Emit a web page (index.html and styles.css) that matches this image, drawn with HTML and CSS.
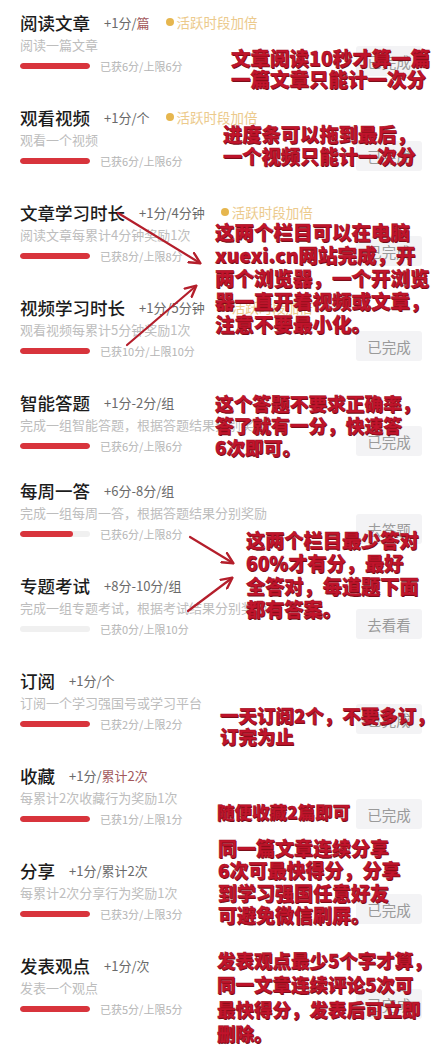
FILE: index.html
```html
<!DOCTYPE html>
<html lang="zh-CN">
<head>
<meta charset="utf-8">
<title>学习积分</title>
<link rel="stylesheet" href="styles.css">
</head>
<body>
<div class="page">
  <ul class="tasks">
    <li class="task">
      <div class="info">
        <div class="head"><span class="name">阅读文章</span><span class="pts">+1分/<em>篇</em></span><span class="badge"><i class="dot"></i>活跃时段加倍</span></div>
        <div class="desc">阅读一篇文章</div>
        <div class="prog"><span class="bar"><span class="fill" style="width:100%"></span></span><span class="got">已获6分/上限6分</span></div>
      </div>
      <span class="btn">已完成</span>
    </li>
    <li class="task">
      <div class="info">
        <div class="head"><span class="name">观看视频</span><span class="pts">+1分/个</span><span class="badge"><i class="dot"></i>活跃时段加倍</span></div>
        <div class="desc">观看一个视频</div>
        <div class="prog"><span class="bar"><span class="fill" style="width:100%"></span></span><span class="got">已获6分/上限6分</span></div>
      </div>
      <span class="btn">已完成</span>
    </li>
    <li class="task">
      <div class="info">
        <div class="head"><span class="name">文章学习时长</span><span class="pts">+1分/4分钟</span><span class="badge"><i class="dot"></i>活跃时段加倍</span></div>
        <div class="desc">阅读文章每累计4分钟奖励1次</div>
        <div class="prog"><span class="bar"><span class="fill" style="width:100%"></span></span><span class="got">已获8分/上限8分</span></div>
      </div>
      <span class="btn">已完成</span>
    </li>
    <li class="task">
      <div class="info">
        <div class="head"><span class="name">视频学习时长</span><span class="pts">+1分/5分钟</span><span class="badge"><i class="dot"></i>活跃时段加倍</span></div>
        <div class="desc">观看视频每累计5分钟奖励1次</div>
        <div class="prog"><span class="bar"><span class="fill" style="width:100%"></span></span><span class="got">已获10分/上限10分</span></div>
      </div>
      <span class="btn">已完成</span>
    </li>
    <li class="task task--short">
      <div class="info">
        <div class="head"><span class="name">智能答题</span><span class="pts">+1分-2分/组</span></div>
        <div class="desc">完成一组智能答题，根据答题结果分别奖励</div>
        <div class="prog"><span class="bar"><span class="fill" style="width:100%"></span></span><span class="got">已获6分/上限6分</span></div>
      </div>
      <span class="btn">已完成</span>
    </li>
    <li class="task">
      <div class="info">
        <div class="head"><span class="name">每周一答</span><span class="pts">+6分-8分/组</span></div>
        <div class="desc">完成一组每周一答，根据答题结果分别奖励</div>
        <div class="prog"><span class="bar"><span class="fill" style="width:75%"></span></span><span class="got">已获6分/上限8分</span></div>
      </div>
      <span class="btn">去答题</span>
    </li>
    <li class="task">
      <div class="info">
        <div class="head"><span class="name">专题考试</span><span class="pts">+8分-10分/组</span></div>
        <div class="desc">完成一组专题考试，根据考试结果分别奖励</div>
        <div class="prog"><span class="bar"><span class="fill" style="width:0%"></span></span><span class="got">已获0分/上限10分</span></div>
      </div>
      <span class="btn">去看看</span>
    </li>
    <li class="task">
      <div class="info">
        <div class="head"><span class="name">订阅</span><span class="pts">+1分/个</span></div>
        <div class="desc">订阅一个学习强国号或学习平台</div>
        <div class="prog"><span class="bar"><span class="fill" style="width:100%"></span></span><span class="got">已获2分/上限2分</span></div>
      </div>
      <span class="btn">已完成</span>
    </li>
    <li class="task">
      <div class="info">
        <div class="head"><span class="name">收藏</span><span class="pts">+1分/<em>累计2次</em></span></div>
        <div class="desc">每累计2次收藏行为奖励1次</div>
        <div class="prog"><span class="bar"><span class="fill" style="width:100%"></span></span><span class="got">已获1分/上限1分</span></div>
      </div>
      <span class="btn">已完成</span>
    </li>
    <li class="task">
      <div class="info">
        <div class="head"><span class="name">分享</span><span class="pts">+1分/累计2次</span></div>
        <div class="desc">每累计2次分享行为奖励1次</div>
        <div class="prog"><span class="bar"><span class="fill" style="width:100%"></span></span><span class="got">已获3分/上限3分</span></div>
      </div>
      <span class="btn">已完成</span>
    </li>
    <li class="task">
      <div class="info">
        <div class="head"><span class="name">发表观点</span><span class="pts">+1分/次</span></div>
        <div class="desc">发表一个观点</div>
        <div class="prog"><span class="bar"><span class="fill" style="width:100%"></span></span><span class="got">已获5分/上限5分</span></div>
      </div>
      <span class="btn">已完成</span>
    </li>
  </ul>

  <svg class="arrows" width="440" height="1045" viewBox="0 0 440 1045">
    <defs>
      <marker id="ah" viewBox="0 0 12 12" refX="10.5" refY="6" markerWidth="13" markerHeight="13" markerUnits="userSpaceOnUse" orient="auto">
        <path d="M1,1 L11,6 L1,11" fill="none" stroke="#b41e2b" stroke-width="2.2" stroke-linecap="round" stroke-linejoin="round"/>
      </marker>
    </defs>
    <g stroke="#b41e2b" stroke-width="2.2" stroke-linecap="round" fill="none">
      <line x1="118" y1="213" x2="200" y2="263" marker-end="url(#ah)"/>
      <line x1="127" y1="345" x2="196" y2="286" marker-end="url(#ah)"/>
      <line x1="190" y1="537" x2="233" y2="563" marker-end="url(#ah)"/>
      <line x1="188" y1="611" x2="232" y2="578" marker-end="url(#ah)"/>
    </g>
  </svg>

  <div class="note note-1">文章阅读10秒才算一篇<br>一篇文章只能计一次分</div>
  <div class="note note-2">进度条可以拖到最后，<br>一个视频只能计一次分</div>
  <div class="note note-3">这两个栏目可以在电脑<br>xuexi.cn网站完成，开<br>两个浏览器，一个开浏览<br>器一直开着视频或文章，<br>注意不要最小化。</div>
  <div class="note note-4">这个答题不要求正确率，<br>答了就有一分，快速答<br>6次即可。</div>
  <div class="note note-5">这两个栏目最少答对<br>60%才有分，最好<br>全答对，每道题下面<br>都有答案。</div>
  <div class="note note-6">一天订阅2个，不要多订，<br>订完为止</div>
  <div class="note note-7">随便收藏2篇即可</div>
  <div class="note note-8">同一篇文章连续分享<br>6次可最快得分，分享<br>到学习强国任意好友<br>可避免微信刷屏。</div>
  <div class="note note-9">发表观点最少5个字才算，<br>同一文章连续评论5次可<br>最快得分，发表后可立即<br>删除。</div>
</div>
</body>
</html>
```

FILE: styles.css
```css
html, body {
  margin: 0;
  padding: 0;
  background: #ffffff;
}

.page {
  position: relative;
  width: 440px;
  height: 1045px;
  overflow: hidden;
  font-family: "Noto Sans CJK SC", "Noto Sans", sans-serif;
}

.tasks {
  list-style: none;
  margin: 0;
  padding: 0;
}

.task {
  display: flex;
  box-sizing: border-box;
  height: 95px;
  padding: 10px 18px 0 20px;
}

.task--short {
  height: 88px;
}

.info {
  flex: 1;
  min-width: 0;
  white-space: nowrap;
}

.head {
  display: flex;
  align-items: center;
  height: 24px;
}

.name {
  font-size: 17.5px;
  font-weight: 500;
  color: #1c1c1c;
}

.pts {
  margin-left: 14px;
  font-size: 13px;
  color: #6a6a6a;
}

.pts em {
  font-style: normal;
  color: #a2585c;
}

.badge {
  display: flex;
  align-items: center;
  margin-left: 16px;
  font-size: 13.5px;
  color: #ecca8c;
}

.dot {
  display: block;
  width: 8px;
  height: 8px;
  border-radius: 50%;
  background: #e6b64e;
  margin-right: 3px;
}

.desc {
  height: 22px;
  line-height: 22px;
  font-size: 13px;
  color: #bdbdbd;
}

.prog {
  display: flex;
  align-items: center;
  height: 20px;
}

.bar {
  display: block;
  width: 70px;
  height: 6px;
  border-radius: 3px;
  background: #f0f0f0;
  overflow: hidden;
}

.fill {
  display: block;
  height: 100%;
  border-radius: 3px;
  background: #d8343c;
}

.got {
  margin-left: 10px;
  font-size: 11px;
  color: #b4b4b4;
}

.btn {
  flex: none;
  display: flex;
  align-items: center;
  justify-content: center;
  width: 66px;
  height: 30px;
  margin-top: 36px;
  border-radius: 3px;
  background: #f3f3f5;
  color: #9a9a9a;
  font-size: 14.5px;
}

.arrows {
  position: absolute;
  left: 0;
  top: 0;
  pointer-events: none;
}

.note {
  position: absolute;
  white-space: nowrap;
  color: #c1142c;
  font-weight: 900;
  -webkit-text-stroke: 0.45px #a0101f;
  text-shadow: 0.7px 0.7px 0 #6e0b16;
}

.note-1 { left: 231px; top: 47px;  font-size: 19.5px; line-height: 21px; }
.note-2 { left: 223px; top: 123px; font-size: 19.3px; line-height: 22px; }
.note-3 { left: 215px; top: 220px; font-size: 19.5px; line-height: 23px; }
.note-4 { left: 215px; top: 392px; font-size: 18.7px; line-height: 22px; }
.note-5 { left: 246px; top: 529px; font-size: 19.2px; line-height: 23px; }
.note-6 { left: 220px; top: 705px; font-size: 18.5px; line-height: 21px; }
.note-7 { left: 217px; top: 801px; font-size: 17.5px; line-height: 22px; }
.note-8 { left: 218px; top: 837px; font-size: 19px;   line-height: 22.3px; }
.note-9 { left: 217px; top: 948px; font-size: 18.5px; line-height: 24.3px; }
```
